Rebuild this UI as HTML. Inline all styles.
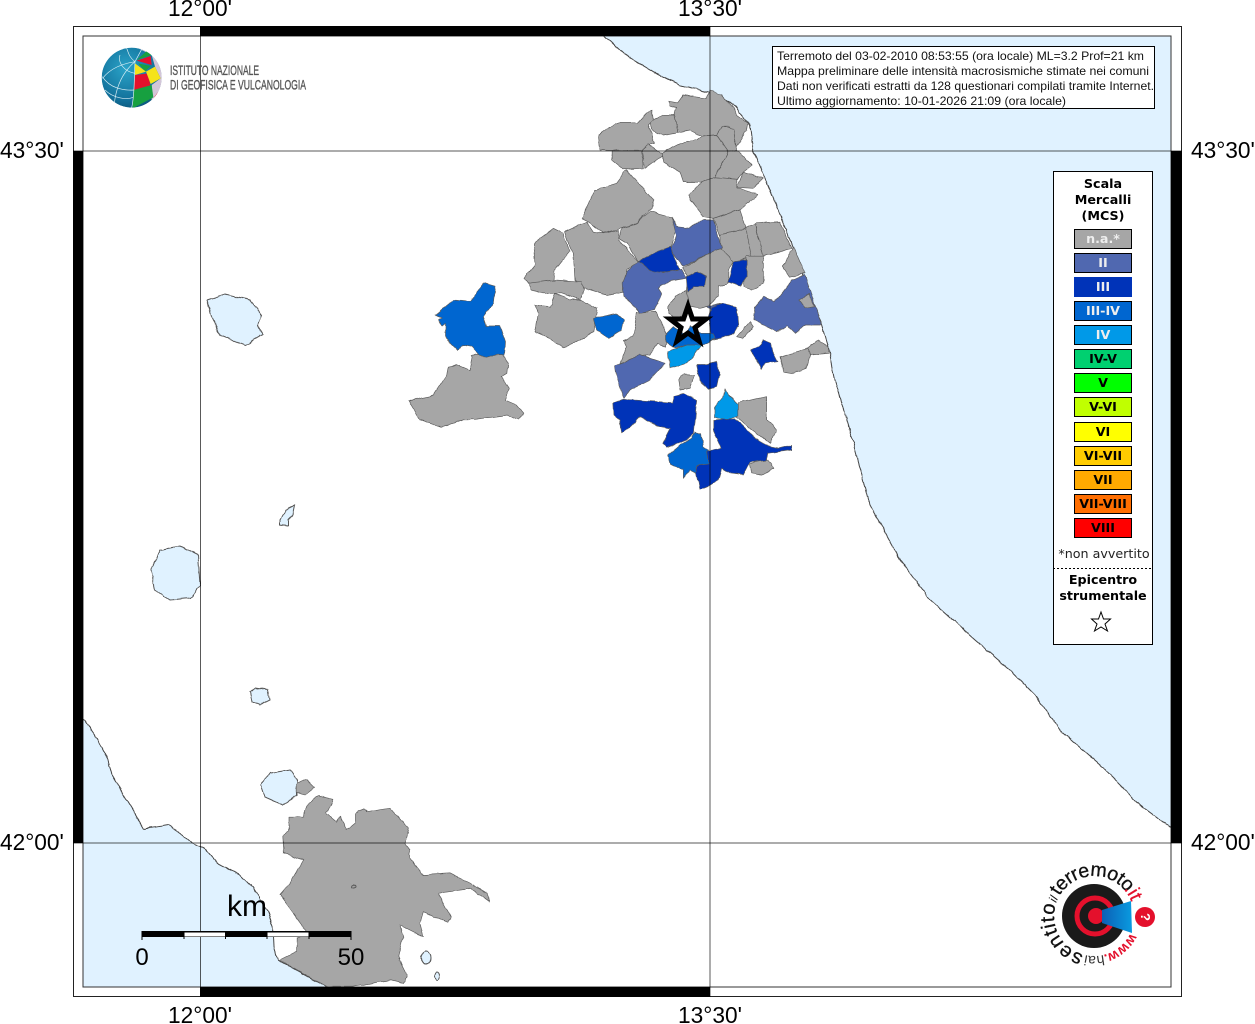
<!DOCTYPE html>
<html><head><meta charset="utf-8"><style>
html,body{margin:0;padding:0;background:#fff;width:1255px;height:1024px;overflow:hidden}
svg{display:block}
text{font-family:"Liberation Sans",sans-serif}
.g polygon{fill:#a6a6a6;stroke:#5a5a5a;stroke-width:2;stroke-linejoin:round}
.g polygon.b2{fill:#5068b0}
.g polygon.b3{fill:#0033b8}
.g polygon.b34{fill:#0066d0}
.g polygon.b4{fill:#0099e8}
.l rect{stroke:#000;stroke-width:1}
.l text{font-family:"DejaVu Sans",sans-serif;font-weight:bold;font-size:12.700px;text-anchor:middle}
</style></head><body>
<svg width="1255" height="1024" viewBox="0 0 1255 1024" xmlns="http://www.w3.org/2000/svg">
<defs>
<clipPath id="mc"><rect x="83" y="36" width="1088" height="951"/></clipPath>
<filter id="r" x="-5%" y="-5%" width="110%" height="110%" color-interpolation-filters="sRGB"><feTurbulence type="fractalNoise" baseFrequency=".1" numOctaves="2" seed="3" result="n"/><feDisplacementMap in="SourceGraphic" in2="n" scale="3.500" xChannelSelector="R" yChannelSelector="G"/></filter>
<clipPath id="gc"><circle cx="215" cy="203" r="90"/></clipPath>
<radialGradient id="gb" cx=".4" cy=".35" r=".75"><stop offset="0" stop-color="#2aa3c8"/><stop offset=".7" stop-color="#12709a"/><stop offset="1" stop-color="#0b4f72"/></radialGradient>
<linearGradient id="cone" x1="0" y1="0" x2="1" y2="0"><stop offset="0" stop-color="#0b5fb5"/><stop offset="1" stop-color="#0a9be0"/></linearGradient>
<path id="a1" d="M1130.300,932.900 A40,40 0 0 1 1104.400,954.600"/>
<path id="a2" d="M1103.700,954.800 A40,40 0 0 1 1085,955"/>
<path id="a3" d="M1083.600,954.600 A40,40 0 0 1 1056,903.600"/>
<path id="a4" d="M1056.200,903 A40,40 0 0 1 1059.400,896"/>
<path id="a5" d="M1059.400,896 A40,40 0 0 1 1124.600,890.300"/>
<path id="a6" d="M1123.700,889.200 A40,40 0 0 1 1131.600,902.300"/>
</defs>
<rect width="1255" height="1024" fill="#fff"/>
<g clip-path="url(#mc)">
<g filter="url(#r)">
<!-- seas -->
<polygon fill="#e0f2ff" stroke="#444" stroke-width="1" points="590,20 605,36 625,55 650,70 680,85 708,92 720,95 735,107 750,125 753,150 770,190 790,240 805,280 822,325 828,345 835,380 850,430 870,505 900,560 930,600 975,640 1010,670 1035,695 1060,730 1100,765 1140,805 1171,828 1200,840 1200,20"/>
<polygon fill="#e0f2ff" stroke="#444" stroke-width="1" points="60,695 83,718 95,735 108,760 112,775 125,797 133,810 144,829 168,825 183,835 192,843 203,847 217,863 240,875 253,888 267,910 273,927 274,947 278,960 327,987 345,1010 60,1010"/>
<!-- lakes -->
<g fill="#e0f2ff" stroke="#555" stroke-width="1">
<polygon points="207,300 225,294 250,300 262,315 258,325 262,335 245,345 220,335 212,318"/>
<polygon points="280,520 285,510 295,505 293,515 288,520 288,526 280,525"/>
<polygon points="151,570 160,550 180,546 198,555 200,585 190,598 170,600 155,590"/>
<polygon points="250,692 255,688 268,690 270,700 260,705 252,702"/>
<polygon points="261,785 270,773 290,770 297,780 297,795 283,805 265,797"/>
<ellipse cx="426" cy="958" rx="5" ry="6"/>
<ellipse cx="437" cy="976" rx="2.500" ry="4"/>
</g>
<!-- Rome area -->
<g class="g" transform="translate(70 760) scale(.33333)">
<polygon points="680,70 710,57 735,82 705,105 680,95"/>
<polygon points="637,230 657,215 657,170 700,170 715,130 745,108 790,118 770,160 800,185 810,170 830,210 855,190 855,160 880,145 890,155 960,145 1015,205 1005,250 1020,270 1020,295 1060,345 1140,340 1210,375 1250,400 1260,425 1205,385 1105,400 1145,475 1130,485 1060,455 1050,490 1060,530 990,495 1000,530 985,590 1010,650 1000,670 960,660 905,670 850,680 770,680 630,600 680,575 680,535 715,520 630,405 660,370 700,300 640,280"/>
</g>
<ellipse cx="353.500" cy="886.500" rx="2" ry="1.500" fill="#a6a6a6" stroke="#555"/>
<!-- communes -->
<g class="g" transform="translate(400 80) scale(.33333)">
<polygon points="805,65 832,70 850,45 880,50 920,55 930,30 965,45 1000,85 1010,105 1045,130 1040,155 1010,200 1000,150 985,140 965,140 950,165 905,168 870,150 835,157 825,105 830,85 810,80"/>
<polygon points="750,125 790,105 825,105 835,157 790,165 755,150"/>
<polygon points="595,165 645,130 710,130 755,92 760,120 745,135 765,190 735,200 720,215 600,210"/>
<polygon points="635,212 725,212 730,265 670,268 635,240"/>
<polygon points="725,210 745,192 790,225 735,265"/>
<polygon points="785,222 800,210 840,190 890,180 905,168 950,165 985,215 945,292 905,305 850,305 840,275 790,245"/>
<polygon points="950,165 965,140 1000,145 1010,210 985,215"/>
<polygon points="985,215 1010,210 1055,255 1030,275 1012,298 945,292"/>
<polygon points="1030,275 1090,295 1060,325 1012,322"/>
<polygon points="905,305 945,292 1012,298 1012,322 1072,345 1020,390 940,415 910,410 870,360 870,345"/>
<polygon points="680,270 710,305 760,360 755,385 700,435 660,445 610,460 575,430 545,415 585,330 650,310"/>
<polygon points="750,395 815,412 830,440 810,510 715,545 680,490 655,475 665,445 700,435"/>
<polygon points="940,415 1020,390 1038,445 960,468"/>
<polygon points="960,465 1040,445 1058,530 1000,548 960,510"/>
<polygon points="1038,445 1065,432 1090,530 1055,535"/>
<polygon points="1065,430 1140,425 1175,505 1090,530"/>
<polygon points="495,455 560,425 580,455 610,460 655,450 655,480 715,545 680,570 668,635 620,645 555,625 525,600 520,520 510,500"/>
<polygon points="400,490 460,445 490,460 510,515 465,570 462,600 385,612 372,595 405,555"/>
<polygon points="385,610 462,600 545,605 555,630 540,660 485,640 430,640 395,630"/>
<polygon points="405,675 450,680 465,640 510,660 545,660 590,685 580,755 525,790 490,805 450,775 405,755 415,700"/>
<polygon points="848,565 925,520 960,505 1000,545 985,570 985,610 955,618 955,650 925,678 900,685 870,680 860,635 865,590"/>
<polygon points="1040,530 1090,530 1090,610 1055,630 1030,618"/>
<polygon points="215,825 310,825 325,850 322,880 305,890 328,925 315,960 350,975 370,998 355,1018 325,1005 225,1018 190,1018 125,1042 60,1020 25,962 100,945 140,885 145,860 170,855 210,872 218,830"/>
<polygon points="712,700 770,695 800,765 795,800 770,790 750,825 710,830 660,850 680,800 670,780 700,770"/>
<polygon points="805,680 825,650 860,630 870,680 850,705 830,715 805,700"/>
<polygon points="835,900 850,882 885,885 870,925 840,930"/>
<polygon points="1140,830 1225,805 1230,825 1220,865 1180,880 1150,875"/>
<polygon points="1225,805 1255,780 1285,800 1285,820 1230,825"/>
<polygon points="1010,770 1050,725 1060,740 1030,775"/>
<polygon points="1150,560 1180,500 1215,580 1170,590"/>
<polygon points="1015,968 1100,950 1100,1020 1130,1050 1110,1090 1055,1050 1010,1010"/>
<polygon points="1050,1150 1100,1135 1120,1165 1085,1185 1055,1180"/>
<polygon class="b2" points="815,410 830,440 870,445 910,420 940,420 965,505 925,520 850,560 810,510 830,470"/>
<polygon class="b3" points="715,545 770,515 810,500 840,570 780,578 740,570"/>
<polygon class="b3" points="1000,545 1040,540 1040,590 1020,618 985,605"/>
<polygon class="b3" points="860,590 890,575 920,590 915,620 880,620 865,635"/>
<polygon class="b34" points="580,715 650,700 672,720 665,750 625,775 590,750"/>
<polygon class="b2" points="668,610 680,575 715,545 750,572 790,578 845,568 860,595 810,603 775,625 785,640 765,690 720,700 695,670 670,650"/>
<polygon class="b34" points="105,705 135,680 160,660 210,665 250,610 285,620 280,670 250,710 260,738 300,738 315,785 312,825 240,828 215,800 185,795 175,810 135,770 135,730 125,738 115,720 125,712"/>
<polygon class="b2" points="645,858 720,825 795,850 750,900 690,930 672,955 650,895"/>
<polygon class="b2" points="920,680 960,670 940,690"/>
<polygon class="b3" points="925,710 935,682 965,670 1010,680 1015,740 1000,762 960,775 935,780 930,745"/>
<polygon class="b34" points="795,765 820,740 860,765 870,735 900,760 940,760 945,775 905,795 880,805 860,795 825,805 795,785"/>
<polygon class="b4" points="805,815 860,795 905,795 880,830 860,850 810,865"/>
<polygon class="b3" points="890,855 915,855 950,845 958,880 950,920 925,928 900,900"/>
<polygon class="b3" points="1052,810 1075,800 1090,780 1115,790 1120,815 1135,845 1095,850 1085,870 1075,845"/>
<polygon class="b2" points="1065,680 1090,650 1125,665 1175,600 1215,585 1265,735 1215,735 1185,760 1160,735 1130,755 1060,720"/>
<polygon points="1197,660 1225,640 1245,680 1215,685"/>
<polygon class="b3" points="640,970 670,958 820,968 820,950 850,942 890,960 880,1060 860,1080 800,1105 787,1090 810,1045 770,1038 720,1010 690,1040 665,1060 660,1020 642,1005"/>
<polygon class="b34" points="803,1125 840,1095 875,1075 885,1055 905,1060 910,1100 925,1110 928,1150 890,1180 870,1170 850,1195 850,1170 810,1150"/>
<polygon class="b3" points="890,1155 925,1150 920,1115 965,1105 940,1050 940,1020 1005,1015 1050,1060 1095,1095 1135,1105 1175,1095 1175,1110 1105,1120 1100,1140 1050,1145 1030,1185 990,1180 965,1165 955,1200 925,1218 900,1228 890,1180"/>
<polygon class="b4" points="975,925 985,945 1015,975 1015,1005 980,1020 945,1010 945,980 970,950"/>
</g>
</g>
</g>
<!-- star epicentre -->
<polygon fill="none" stroke="#000" stroke-width="5" points="688,306 692.500,319 706,319 695,327.500 699,341 688,333 677,341 681,327.500 670,319 683.500,319"/>
<!-- frame -->
<rect x="83" y="36" width="1088" height="951" fill="none" stroke="#333" stroke-width="1"/>
<rect x="73.500" y="26.500" width="1108" height="970" fill="none" stroke="#222" stroke-width="1"/>
<g fill="#000">
<rect x="200" y="26" width="510" height="10"/>
<rect x="200" y="987" width="510" height="10"/>
<rect x="73" y="151" width="10" height="692"/>
<rect x="1171" y="151" width="11" height="692"/>
</g>
<g stroke="#000" stroke-opacity=".65" stroke-width="1">
<line x1="200.500" y1="26" x2="200.500" y2="997"/>
<line x1="710" y1="26" x2="710" y2="997"/>
<line x1="73" y1="151" x2="1182" y2="151"/>
<line x1="73" y1="843" x2="1182" y2="843"/>
</g>
<!-- tick labels -->
<g font-size="22.700" fill="#000">
<text x="200" y="16" text-anchor="middle">12°00'</text>
<text x="710" y="16" text-anchor="middle">13°30'</text>
<text x="200" y="1023" text-anchor="middle">12°00'</text>
<text x="710" y="1023" text-anchor="middle">13°30'</text>
<text x="0" y="158">43°30'</text>
<text x="0" y="850">42°00'</text>
<text x="1191" y="158">43°30'</text>
<text x="1191" y="850">42°00'</text>
</g>
<!-- INGV logo -->
<g transform="translate(60 10) scale(.33333)">
<g clip-path="url(#gc)">
<circle cx="215" cy="203" r="90" fill="url(#gb)"/>
<polygon fill="#d3c6d8" points="225,110 310,110 310,300 275,290 275,225 302,205 285,170 275,135"/>
<polygon fill="#17a040" points="230,150 262,122 275,135"/>
<polygon fill="#e4102c" points="230,152 272,138 275,165"/>
<polygon fill="#17a040" points="235,160 272,168 255,185"/>
<polygon fill="#f5e31a" points="225,160 258,185 225,195"/>
<polygon fill="#e4102c" points="225,195 265,190 272,235 222,240"/>
<polygon fill="#f5e31a" points="258,185 285,170 302,205 272,222"/>
<polygon fill="#17a040" points="220,240 275,225 280,262 218,295"/>
<polygon fill="#e4102c" points="282,262 295,245 290,262"/>
<g fill="none" stroke="#d8eef5" stroke-width="2">
<path d="M225,155 C205,140 205,125 200,115 M225,155 L245,118 M225,155 C190,160 150,175 128,205 M225,155 C195,180 170,220 163,280 M225,155 C222,200 225,250 215,293"/>
<path d="M180,135 C172,160 195,185 225,190 M127,200 C150,235 190,242 222,240 M135,240 C160,265 200,270 220,262"/>
</g>
</g>
</g>
<g fill="#555" stroke="#555" stroke-width=".35" font-size="14">
<text x="170" y="75" textLength="89" lengthAdjust="spacingAndGlyphs">ISTITUTO NAZIONALE</text>
<text x="170" y="89.500" textLength="136" lengthAdjust="spacingAndGlyphs">DI GEOFISICA E VULCANOLOGIA</text>
</g>
<!-- info box -->
<rect x="772.500" y="46.500" width="382" height="62" fill="#fff" stroke="#000" stroke-width="1"/>
<g font-size="12" fill="#111">
<text x="777" y="60" textLength="367" lengthAdjust="spacingAndGlyphs">Terremoto del 03-02-2010 08:53:55 (ora locale) ML=3.2 Prof=21 km</text>
<text x="777" y="75" textLength="372" lengthAdjust="spacingAndGlyphs">Mappa preliminare delle intensità macrosismiche stimate nei comuni</text>
<text x="777" y="90" textLength="377" lengthAdjust="spacingAndGlyphs">Dati non verificati estratti da 128 questionari compilati tramite Internet.</text>
<text x="777" y="105" textLength="289" lengthAdjust="spacingAndGlyphs">Ultimo aggiornamento: 10-01-2026 21:09 (ora locale)</text>
</g>
<!-- legend -->
<rect x="1053.500" y="171.500" width="99" height="473" fill="#fff" stroke="#000" stroke-width="1"/>
<g class="l">
<text x="1103" y="188">Scala</text>
<text x="1103" y="204">Mercalli</text>
<text x="1103" y="220">(MCS)</text>
<rect x="1074.500" y="229.500" width="57" height="19" fill="#a6a6a6"/><text x="1103" y="243" fill="#eee">n.a.*</text>
<rect x="1074.500" y="253.500" width="57" height="19" fill="#5068b0"/><text x="1103" y="267" fill="#eee">II</text>
<rect x="1074.500" y="277.500" width="57" height="19" fill="#0033b8" style="stroke:#0033b8"/><text x="1103" y="291" fill="#eee">III</text>
<rect x="1074.500" y="301.500" width="57" height="19" fill="#0066d0"/><text x="1103" y="315" fill="#eee">III-IV</text>
<rect x="1074.500" y="325.500" width="57" height="19" fill="#0099e8"/><text x="1103" y="339" fill="#eee">IV</text>
<rect x="1074.500" y="349.500" width="57" height="19" fill="#00d070"/><text x="1103" y="363">IV-V</text>
<rect x="1074.500" y="373.500" width="57" height="19" fill="#00ff00"/><text x="1103" y="387">V</text>
<rect x="1074.500" y="397.500" width="57" height="19" fill="#c0ff00"/><text x="1103" y="411">V-VI</text>
<rect x="1074.500" y="422.500" width="57" height="19" fill="#ffff00"/><text x="1103" y="436">VI</text>
<rect x="1074.500" y="446.500" width="57" height="19" fill="#ffcc00"/><text x="1103" y="460">VI-VII</text>
<rect x="1074.500" y="470.500" width="57" height="19" fill="#ffaa00"/><text x="1103" y="484">VII</text>
<rect x="1074.500" y="494.500" width="57" height="19" fill="#ff6e00"/><text x="1103" y="508">VII-VIII</text>
<rect x="1074.500" y="518.500" width="57" height="19" fill="#ff0000"/><text x="1103" y="532">VIII</text>
<text x="1104" y="558" style="font-weight:normal" fill="#222">*non avvertito</text>
<text x="1103" y="584">Epicentro</text>
<text x="1103" y="600">strumentale</text>
</g>
<line x1="1053" y1="568.500" x2="1151" y2="568.500" stroke="#000" stroke-dasharray="2,2"/>
<polygon fill="#fff" stroke="#000" stroke-width="1" points="1101,612 1103.500,619 1110.500,619 1105,624 1107.500,631 1101,627 1094.500,631 1097,624 1091.500,619 1098.500,619"/>
<!-- scale bar -->
<g>
<rect x="142" y="931" width="209" height="6" fill="#000"/>
<rect x="184" y="932.500" width="41" height="4" fill="#fff"/>
<rect x="267.500" y="932.500" width="41" height="4" fill="#fff"/>
<g stroke="#000" stroke-width="1"><line x1="142" y1="931" x2="142" y2="940"/><line x1="184" y1="931" x2="184" y2="939"/><line x1="225.500" y1="931" x2="225.500" y2="939"/><line x1="267" y1="931" x2="267" y2="939"/><line x1="309" y1="931" x2="309" y2="939"/><line x1="351" y1="931" x2="351" y2="940"/></g>
<text x="247" y="916" font-size="30" text-anchor="middle" fill="#000">km</text>
<text x="142" y="965" font-size="24" text-anchor="middle" fill="#000">0</text>
<text x="351" y="965" font-size="24" text-anchor="middle" fill="#000">50</text>
</g>
<!-- HSIT logo -->
<g>
<circle cx="1094" cy="916" r="32" fill="#1a1a1a"/>
<circle cx="1095" cy="916" r="18" fill="none" stroke="#e4102c" stroke-width="5"/>
<circle cx="1096" cy="916" r="8" fill="#e4102c"/>
<polygon fill="url(#cone)" points="1102,910 1131,901 1132,933 1102,923"/>
<circle cx="1145" cy="917" r="10" fill="#e4102c"/>
<text x="1145" y="921" font-size="13" font-weight="bold" fill="#fff" text-anchor="middle" transform="rotate(90 1145 917)">?</text>
<text font-size="14" font-weight="bold" fill="#e4102c"><textPath href="#a1">www.</textPath></text>
<text font-size="14" fill="#333"><textPath href="#a2">hai</textPath></text>
<text font-size="20" letter-spacing=".8" fill="#111" stroke="#111" stroke-width=".3"><textPath href="#a3">sentito</textPath></text>
<text font-size="12" font-style="italic" fill="#111"><textPath href="#a4">il</textPath></text>
<text font-size="19.500" letter-spacing="-.5" fill="#111" stroke="#111" stroke-width=".3"><textPath href="#a5">terremoto</textPath></text>
<text font-size="19" fill="#e4102c" stroke="#e4102c" stroke-width=".3"><textPath href="#a6">.it</textPath></text>
</g>
</svg>
</body></html>
